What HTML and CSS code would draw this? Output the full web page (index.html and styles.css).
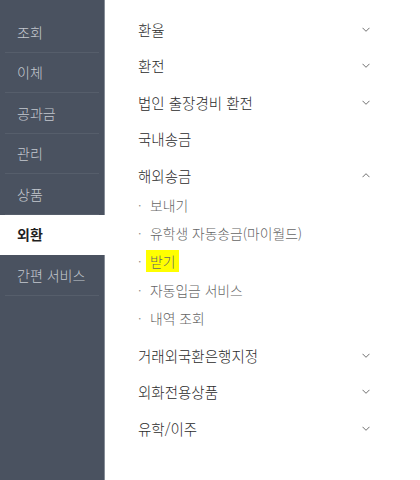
FILE: index.html
```html
<!DOCTYPE html>
<html lang="ko">
<head>
    <meta charset="UTF-8">
    <meta name="viewport" content="width=device-width, initial-scale=1.0">
    <title>외환</title>
    <link rel="stylesheet" href="styles.css">
</head>
<body>
<div class="page">
    <nav class="side">
        <ul>
            <li><a href="#">조회</a></li>
            <li><a href="#">이체</a></li>
            <li><a href="#">공과금</a></li>
            <li><a href="#">관리</a></li>
            <li><a href="#">상품</a></li>
            <li class="active"><a href="#">외환</a></li>
            <li><a href="#">간편 서비스</a></li>
        </ul>
    </nav>

    <div class="menu">
        <ul class="groups">
            <li class="group">
                <a href="#">환율</a>
                <svg class="chev" width="8" height="5" viewBox="0 0 8 5"><path d="M0.5 0.8l3.5 3.5 3.5-3.5"/></svg>
            </li>
            <li class="group">
                <a href="#">환전</a>
                <svg class="chev" width="8" height="5" viewBox="0 0 8 5"><path d="M0.5 0.8l3.5 3.5 3.5-3.5"/></svg>
            </li>
            <li class="group">
                <a href="#">법인 출장경비 환전</a>
                <svg class="chev" width="8" height="5" viewBox="0 0 8 5"><path d="M0.5 0.8l3.5 3.5 3.5-3.5"/></svg>
            </li>
            <li class="group">
                <a href="#">국내송금</a>
            </li>
            <li class="group open">
                <a href="#">해외송금</a>
                <svg class="chev" width="8" height="5" viewBox="0 0 8 5"><path d="M0.5 4.2l3.5-3.5 3.5 3.5"/></svg>
            </li>
            <li class="subs">
                <ul>
                    <li><a href="#">보내기</a></li>
                    <li><a href="#">유학생 자동송금(마이월드)</a></li>
                    <li><a href="#"><span class="mark">받기</span></a></li>
                    <li><a href="#">자동입금 서비스</a></li>
                    <li><a href="#">내역 조회</a></li>
                </ul>
            </li>
            <li class="group">
                <a href="#">거래외국환은행지정</a>
                <svg class="chev" width="8" height="5" viewBox="0 0 8 5"><path d="M0.5 0.8l3.5 3.5 3.5-3.5"/></svg>
            </li>
            <li class="group">
                <a href="#">외화전용상품</a>
                <svg class="chev" width="8" height="5" viewBox="0 0 8 5"><path d="M0.5 0.8l3.5 3.5 3.5-3.5"/></svg>
            </li>
            <li class="group">
                <a href="#">유학/이주</a>
                <svg class="chev" width="8" height="5" viewBox="0 0 8 5"><path d="M0.5 0.8l3.5 3.5 3.5-3.5"/></svg>
            </li>
        </ul>
    </div>
</div>
</body>
</html>
```

FILE: styles.css
```css
html, body {
    margin: 0;
    padding: 0;
    background: #fff;
    font-family: "Noto Sans CJK KR", "Noto Sans", sans-serif;
    font-weight: 300;
}

ul {
    list-style: none;
    margin: 0;
    padding: 0;
}

a {
    text-decoration: none;
    color: inherit;
}

.page {
    display: flex;
    min-height: 100vh;
}

/* left rail */
.side {
    width: 104px;
    flex-shrink: 0;
    background: #4a5260;
    border-right: 1px solid #868d97;
    padding-top: 12px;
}

.side li a {
    display: flex;
    align-items: center;
    height: 39.5px;
    padding-left: 17px;
    font-size: 14px;
    color: #c3c8cf;
}

.side li::after {
    content: "";
    display: block;
    height: 1px;
    margin: 0 5px;
    background: #565e6b;
}

.side li.active {
    background: #fff;
    margin-right: -1px;
}

.side li.active a {
    color: #1f1f1f;
    font-weight: bold;
}

.side li.active::after {
    background: #fff;
}

/* right menu */
.menu {
    flex: 1;
    padding: 11px 50px 0 33px;
}

.group {
    display: flex;
    align-items: center;
    justify-content: space-between;
    height: 36.5px;
    font-size: 14.5px;
    color: #2b2b2b;
}

.chev {
    fill: none;
    stroke: #707070;
    stroke-width: 1;
}

.subs {
    margin: -3px 0 5px;
}

.subs li {
    display: flex;
    align-items: center;
    height: 28.3px;
    font-size: 13.8px;
    color: #666;
}

.subs li::before {
    content: "·";
    width: 12px;
    color: #8a8a8a;
}

.mark {
    background: #ffff00;
    padding: 1px 4px;
    margin-left: -4px;
}
```
